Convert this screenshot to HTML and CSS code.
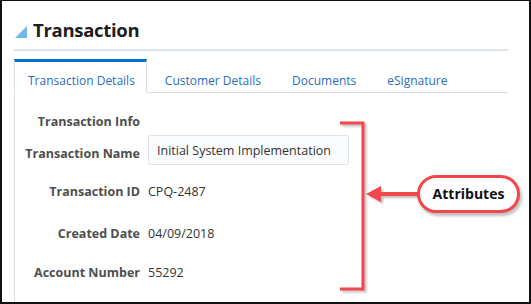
FILE: index.html
```html
<!DOCTYPE html>
<html lang="en">
<head>
    <meta charset="UTF-8">
    <title>Transaction</title>
    <link rel="stylesheet" href="styles.css">
</head>
<body>

<div class="frame">
    <header class="page-header">
        <svg class="collapse-icon" width="12" height="12" viewBox="0 0 12 12">
            <polygon points="0,12 12,0 12,12" fill="#72b8e8"/>
        </svg>
        <h1>Transaction</h1>
    </header>

    <nav class="tabs">
        <a class="tab active">Transaction Details</a>
        <a class="tab">Customer Details</a>
        <a class="tab">Documents</a>
        <a class="tab">eSignature</a>
    </nav>

    <main class="panel">
        <div class="label">Transaction Info</div>
        <div class="value"></div>

        <div class="label">Transaction Name</div>
        <div class="value field-value"><input type="text" class="text-input" value="Initial System Implementation"></div>

        <div class="label">Transaction ID</div>
        <div class="value">CPQ-2487</div>

        <div class="label">Created Date</div>
        <div class="value">04/09/2018</div>

        <div class="label">Account Number</div>
        <div class="value">55292</div>
    </main>

    <!-- callout drawn over the screenshot -->
    <svg class="callout-lines" width="120" height="180" viewBox="0 0 120 180">
        <polyline points="0,2 23,2 23,168 0,168" fill="none" stroke="#f2474d" stroke-width="3"/>
        <line x1="38" y1="73" x2="78" y2="73" stroke="#f2474d" stroke-width="4"/>
        <polygon points="26,73 41,65 41,81" fill="#f2474d"/>
    </svg>
    <div class="callout-bubble">Attributes</div>
</div>

</body>
</html>
```

FILE: styles.css
```css
body {
    margin: 0;
    padding: 0;
    background: #fff;
    font-family: "Open Sans", "Noto Sans", sans-serif;
}

.frame {
    position: relative;
    width: 531px;
    height: 304px;
    box-sizing: border-box;
    border: 2px solid #111;
    border-top-width: 1px;
    background: #fff;
    overflow: hidden;
}

.page-header {
    display: flex;
    align-items: center;
    gap: 6px;
    margin: 0 21px 0 12px;
    padding: 18px 0 8px 1px;
    border-bottom: 2px solid #dde4ea;
}

.page-header h1 {
    margin: 0;
    font-size: 18.5px;
    letter-spacing: -0.3px;
    font-weight: 700;
    color: #1d1d1d;
    line-height: 22px;
}

.collapse-icon {
    margin-top: 3px;
}

.tabs {
    display: flex;
    margin: 8px 21px 0 12px;
    border-bottom: 1px solid #d6dee5;
}

.tab {
    padding: 10px 13px 3px 13px;
    margin-bottom: -1px;
    font-size: 12px;
    color: #2a6cc0;
    border: 1px solid transparent;
    border-top: 3px solid transparent;
    line-height: 17px;
}

.tab.active {
    padding-right: 11px;
    margin-right: 4px;
    border-color: #d6dee5;
    border-top-color: #0572ce;
    border-bottom-color: #fff;
}

.tab + .tab {
    margin-right: 3px;
}

.panel {
    display: grid;
    grid-template-columns: 125px 1fr;
    grid-template-rows: 26px 38px 38px 46px 32px;
    column-gap: 8px;
    align-items: center;
    margin-left: 12px;
    padding-top: 15px;
    height: 220px;
    border-left: 1px solid #d6dee5;
    font-size: 12.5px;
}

.label {
    text-align: right;
    font-weight: 700;
    color: #4e4e4e;
}

.value {
    color: #333;
}

.field-value {
    align-self: start;
    margin-top: 1px;
}

.text-input {
    display: block;
    box-sizing: border-box;
    width: 201px;
    height: 30px;
    padding: 0 8px;
    border: 1px solid #dfe4e8;
    border-radius: 2px;
    background: #fbfcfd;
    font-family: inherit;
    font-size: 12.5px;
    color: #333;
}

.callout-lines {
    position: absolute;
    left: 338px;
    top: 120px;
    filter: drop-shadow(2px 2px 1px rgba(0, 0, 0, 0.25));
}

.callout-bubble {
    position: absolute;
    left: 415px;
    top: 174px;
    width: 97px;
    height: 32px;
    border: 3px solid #f2474d;
    border-radius: 19px;
    background: #fff;
    box-shadow: 2px 3px 3px rgba(0, 0, 0, 0.25);
    text-align: center;
    line-height: 32px;
    font-size: 14px;
    font-weight: 700;
    color: #111;
}
```
